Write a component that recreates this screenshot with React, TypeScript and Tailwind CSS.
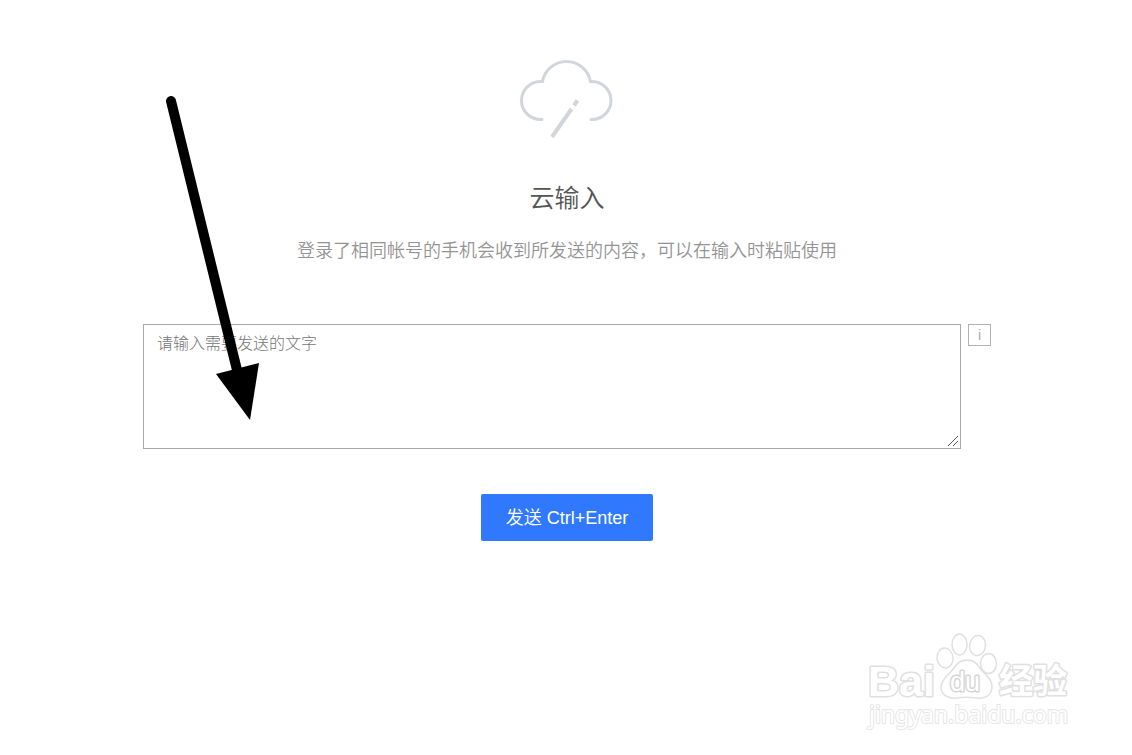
function CloudPenIcon() {
  return (
    <svg
      className="h-20 w-24"
      viewBox="0 0 96 80"
      fill="none"
      stroke="#d2d5dc"
      strokeWidth="3"
      aria-hidden="true"
    >
      <path
        d="M23 61.500 H21.500 A19 19 0 0 1 21.500 23.500 H23.500 A24.400 24.400 0 0 1 71.500 23.500 H73 A19 19 0 0 1 73 61.500 H72"
        strokeLinecap="round"
      />
      <path d="M33 79 L52.500 51" strokeWidth="4" />
      <path d="M55 47.500 L58.500 42.500" strokeWidth="4" />
    </svg>
  );
}

function Arrow() {
  return (
    <svg
      className="pointer-events-none absolute top-24 left-4 h-[325px] w-[110px]"
      viewBox="0 0 110 325"
      aria-hidden="true"
    >
      <path d="M12 5 L78 274" stroke="#000" strokeWidth="10" strokeLinecap="round" />
      <path d="M57 278 L100 267 L91 324 Z" fill="#000" />
    </svg>
  );
}

function ResizeGrip() {
  return (
    <svg
      className="pointer-events-none absolute right-[3px] bottom-[3px] size-2.5"
      viewBox="0 0 10 10"
      stroke="#555"
      aria-hidden="true"
    >
      <path d="M0 10 L10 0 M5 10 L10 5" />
    </svg>
  );
}

function Watermark() {
  return (
    <svg
      className="pointer-events-none absolute right-[42px] bottom-[10px] h-[125px] w-[240px]"
      viewBox="0 0 240 125"
      fill="#fff"
      stroke="#e0e0e0"
      strokeWidth="3"
      strokeLinejoin="round"
      role="img"
      aria-label="Baidu 经验 jingyan.baidu.com"
    >
      <g className="[paint-order:stroke]">
        <text x="18" y="76" fontSize="43" fontWeight="700" fontFamily="Liberation Sans, sans-serif">
          Bai
        </text>
        <text x="149" y="73" fontSize="34" fontWeight="700" fontFamily="Noto Sans CJK SC, sans-serif">
          经验
        </text>
        <text
          x="19"
          y="103"
          fontSize="23"
          fontFamily="Noto Sans, sans-serif"
          stroke="#e6e6e6"
          strokeWidth="2"
        >
          jingyan.baidu.com
        </text>
      </g>
      <g strokeWidth="1.500">
        <ellipse cx="95" cy="38" rx="8" ry="10" transform="rotate(-8 95 38)" />
        <ellipse cx="109.500" cy="24.500" rx="7.500" ry="10.500" />
        <ellipse cx="127.500" cy="25.500" rx="8" ry="10" transform="rotate(8 127.500 25.500)" />
        <ellipse cx="138.500" cy="43.500" rx="8" ry="10" />
        <path d="M117 40 C123 40 127 43 130 48 C134 54 143 59 142 68 C141 76 134 79 127 78 C119 77 114 77 107 78 C98 79 91 75 91 67 C91 59 100 54 104 48 C107 43 111 40 117 40 Z" />
      </g>
      <text
        className="[paint-order:stroke]"
        x="100"
        y="71"
        fontSize="27"
        fontFamily="Liberation Sans, sans-serif"
        stroke="#d6d6d6"
      >
        du
      </text>
    </svg>
  );
}

export default function App() {
  return (
    <div className="relative min-h-screen bg-white pl-0.5 font-['Liberation_Sans','Noto_Sans_CJK_SC',sans-serif]">
      <main className="relative mx-auto flex max-w-[848px] flex-col items-center pt-[58px]">
        <CloudPenIcon />
        <h1 className="mt-10 text-[25px] leading-10 font-[350] text-[#555]">云输入</h1>
        <p className="mt-[17px] text-lg leading-8 font-[350] text-[#949494]">
          登录了相同帐号的手机会收到所发送的内容，可以在输入时粘贴使用
        </p>
        <form
          className="mt-[57px] flex w-full flex-col items-center"
          onSubmit={(event) => event.preventDefault()}
        >
          <div className="flex w-full items-start gap-[7px]">
            <div className="relative flex min-w-0 flex-1">
              <textarea
                aria-label="请输入需要发送的文字"
                placeholder="请输入需要发送的文字"
                className="h-[125px] w-full resize border border-[#a9a9a9] px-[13px] py-[7px] text-base leading-6 font-light text-[#555] outline-none placeholder:text-[#757575] [&::-webkit-resizer]:bg-white"
              />
              <ResizeGrip />
            </div>
            <button
              type="button"
              aria-label="说明"
              className="flex h-[22px] w-[23px] shrink-0 items-center justify-center border border-[#b2b2b2] text-sm leading-none text-[#aaa]"
            >
              i
            </button>
          </div>
          <button
            type="submit"
            className="mt-[45px] h-[47px] w-[172px] rounded-xs bg-[#3079ff] text-lg font-[350] text-white"
          >
            发送 Ctrl+Enter
          </button>
        </form>
        <Arrow />
      </main>
      <Watermark />
    </div>
  );
}
